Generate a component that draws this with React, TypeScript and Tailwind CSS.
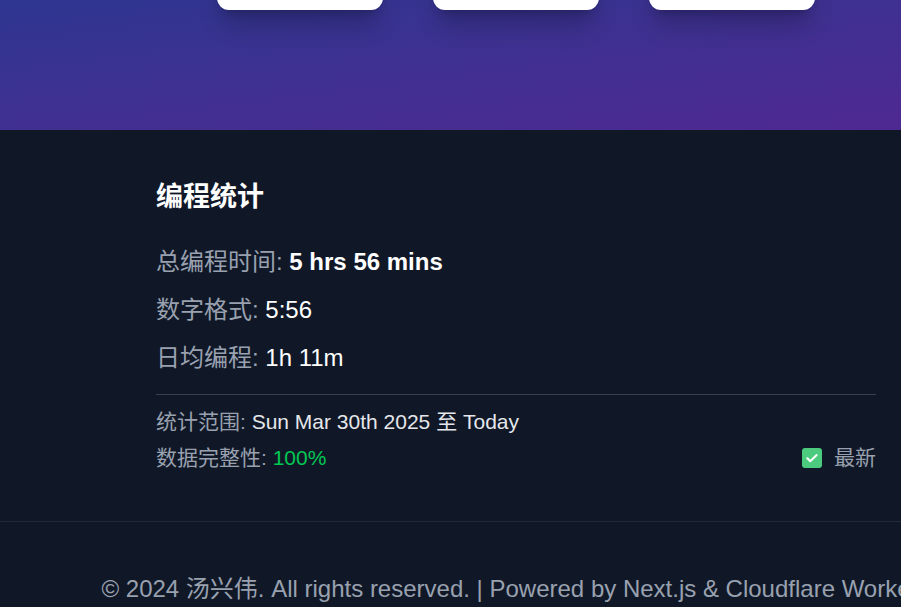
import React from "react";

const font = {
  fontFamily: '"Liberation Sans", Arial, "Noto Sans CJK SC", sans-serif',
};

export default function App() {
  return (
    <div className="w-[1032px] bg-gray-900" style={font}>
      {/* Hero bottom */}
      <section className="h-[130px] bg-gradient-to-br from-[#2d3690] to-[#502791] overflow-hidden">
        <div className="flex justify-center gap-[50px]">
          <div className="w-[166px] h-[50px] -mt-[40px] rounded-xl bg-white shadow-xl shadow-black/20" />
          <div className="w-[166px] h-[50px] -mt-[40px] rounded-xl bg-white shadow-xl shadow-black/20" />
          <div className="w-[166px] h-[50px] -mt-[40px] rounded-xl bg-white shadow-xl shadow-black/20" />
        </div>
      </section>

      {/* Stats */}
      <section className="bg-gray-900 border-b border-gray-800 pt-[51px] pb-[49px]">
        <div className="w-[720px] ml-[156px]">
          <h2 className="text-[27px] leading-8 font-bold text-white">编程统计</h2>
          <div className="mt-[33px] flex flex-col gap-4 text-2xl leading-8">
            <p className="text-gray-400">
              总编程时间: <span className="font-bold text-white">5 hrs 56 mins</span>
            </p>
            <p className="text-gray-400">
              数字格式: <span className="text-white">5:56</span>
            </p>
            <p className="text-gray-400">
              日均编程: <span className="text-white">1h 11m</span>
            </p>
          </div>
          <div className="mt-[20px] border-t border-gray-700 pt-[13px] flex flex-col gap-2 text-[21px] leading-7">
            <p className="text-gray-400">
              统计范围: <span className="text-gray-200">Sun Mar 30th 2025 至 Today</span>
            </p>
            <div className="flex items-center justify-between">
              <p className="text-gray-400">
                数据完整性: <span className="text-green-500">100%</span>
              </p>
              <div className="flex items-center gap-3 text-gray-400">
                <span className="w-5 h-5 rounded-[3px] bg-[#4ccb7e] flex items-center justify-center">
                  <svg width="14" height="14" viewBox="0 0 24 24" fill="none" stroke="white" strokeWidth="3.5" strokeLinecap="round" strokeLinejoin="round">
                    <path d="M4 12.5l5 5L20 7" />
                  </svg>
                </span>
                <span>最新</span>
              </div>
            </div>
          </div>
        </div>
      </section>

      {/* Footer */}
      <footer className="bg-gray-900 pt-[51px] pb-12">
        <p className="text-center text-2xl leading-8 text-gray-400 whitespace-nowrap">
          © 2024 汤兴伟. All rights reserved. | Powered by Next.js &amp; Cloudflare Workers
        </p>
      </footer>
    </div>
  );
}
